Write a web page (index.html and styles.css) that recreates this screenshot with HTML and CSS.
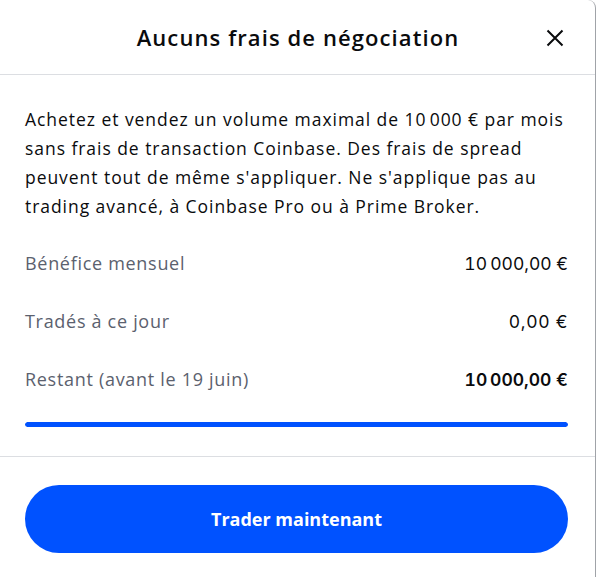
FILE: index.html
```html
<!DOCTYPE html>
<html>
<head>
  <title>Aucuns frais de négociation</title>
  <link rel="stylesheet" href="styles.css">
</head>
<body>
  <div class="modal">
    <header class="modal-header">
      <h1>Aucuns frais de négociation</h1>
      <button class="close" aria-label="Fermer">
        <svg width="18" height="18" viewBox="0 0 18 18">
          <path d="M1.5 1.5 L16.5 16.5 M16.5 1.5 L1.5 16.5" stroke="#0a0b0d" stroke-width="2" fill="none"/>
        </svg>
      </button>
    </header>

    <section class="modal-body">
      <p class="intro">Achetez et vendez un volume maximal de 10&#8239;000&nbsp;€ par mois sans frais de transaction Coinbase. Des frais de spread peuvent tout de même s'appliquer. Ne s'applique pas au trading avancé, à Coinbase Pro ou à Prime Broker.</p>

      <div class="row">
        <span class="label">Bénéfice mensuel</span>
        <span class="value">10&#8239;000,00&nbsp;€</span>
      </div>
      <div class="row">
        <span class="label">Tradés à ce jour</span>
        <span class="value">0,00&nbsp;€</span>
      </div>
      <div class="row">
        <span class="label">Restant (avant le 19 juin)</span>
        <span class="value strong">10&#8239;000,00&nbsp;€</span>
      </div>

      <div class="progress"><div class="progress-fill" style="width: 100%;"></div></div>
    </section>

    <footer class="modal-footer">
      <button class="primary">Trader maintenant</button>
    </footer>
  </div>
</body>
</html>
```

FILE: styles.css
```css
body {
  margin: 0;
  padding: 0;
  background-color: #fff;
  font-family: "Open Sans", Inter, sans-serif;
  color: #0a0b0d;
}

.modal {
  width: 596px;
  height: 577px;
  background-color: #fff;
  border-right: 1px solid #a0a3a8;
  border-top-right-radius: 8px;
  box-sizing: border-box;
  display: flex;
  flex-direction: column;
}

.modal-header {
  position: relative;
  height: 75px;
  border-bottom: 1px solid #dcdee2;
  display: flex;
  align-items: center;
  justify-content: center;
  box-sizing: border-box;
}

.modal-header h1 {
  margin: 0 0 0 1px;
  font-size: 22px;
  font-weight: 600;
  letter-spacing: 1.1px;
}

.close {
  position: absolute;
  right: 31px;
  top: 29px;
  padding: 0;
  border: none;
  background: none;
  cursor: pointer;
  line-height: 0;
}

.modal-body {
  padding: 0 27px 29px 25px;
  border-bottom: 1px solid #dcdee2;
}

.intro {
  margin: 30px 0 13px;
  font-size: 17.5px;
  line-height: 29px;
  letter-spacing: 0.95px;
  color: #0a0b0d;
}

.row {
  display: flex;
  justify-content: space-between;
  align-items: center;
  height: 58px;
  font-size: 18px;
  letter-spacing: 0.7px;
}

.label {
  color: #5b616e;
}

.value {
  font-family: Inter, "Open Sans", sans-serif;
  font-size: 17.5px;
  font-variant-numeric: tabular-nums;
  letter-spacing: 0.7px;
  color: #0a0b0d;
}

.strong {
  font-weight: 600;
}

.progress {
  margin-top: 14px;
  height: 5px;
  border-radius: 3px;
  background-color: #eef0f3;
  overflow: hidden;
}

.progress-fill {
  height: 100%;
  background-color: #0052ff;
  border-radius: 3px;
}

.modal-footer {
  padding: 28px 27px 0 25px;
}

.primary {
  width: 100%;
  height: 68px;
  border: none;
  border-radius: 34px;
  background-color: #0052ff;
  color: #fff;
  font-family: "Open Sans", Inter, sans-serif;
  font-size: 18px;
  font-weight: 700;
  cursor: pointer;
}
```
